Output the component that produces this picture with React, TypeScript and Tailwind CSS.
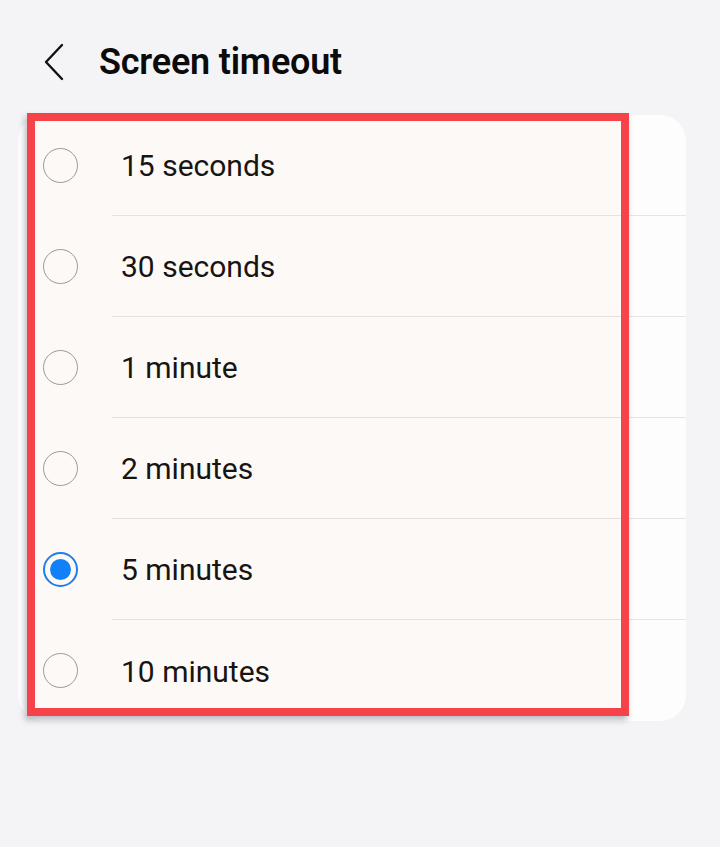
const OPTIONS = [
  "15 seconds",
  "30 seconds",
  "1 minute",
  "2 minutes",
  "5 minutes",
  "10 minutes",
];
const SELECTED = "5 minutes";

function Radio({ checked }: { checked: boolean }) {
  if (checked) {
    return (
      <span className="flex h-[35px] w-[35px] items-center justify-center rounded-full border-2 border-[#1b7df2]">
        <span className="h-[21px] w-[21px] rounded-full bg-[#0a80ff]" />
      </span>
    );
  }
  return (
    <span className="block h-[35px] w-[35px] rounded-full border-[1.5px] border-[#9a9a9a]" />
  );
}

export default function App() {
  return (
    <div
      className="relative h-[847px] w-[720px] overflow-hidden bg-[#f4f4f6]"
      style={{ fontFamily: "Roboto, 'Noto Sans', sans-serif" }}
    >
      {/* header */}
      <div className="flex h-[115px] items-start pt-[40px]">
        <svg
          width="24"
          height="40"
          viewBox="0 0 24 40"
          className="ml-[42px] mt-[2px]"
          fill="none"
          stroke="#111"
          strokeWidth="2.4"
          strokeLinecap="round"
          strokeLinejoin="round"
        >
          <path d="M20 3 L4 20 L20 37" />
        </svg>
        <h1 className="ml-[33px] text-[36px] font-semibold leading-[44px] tracking-[-0.2px] text-[#0b0b0b]">
          Screen timeout
        </h1>
      </div>

      {/* options card */}
      <div className="ml-[18px] w-[668px] rounded-[26px] bg-[#fdfdfd]">
        {OPTIONS.map((label, i) => (
          <div key={label} className="flex h-[101px] items-stretch">
            <div className="flex w-[94px] items-center pl-[25px]">
              <Radio checked={label === SELECTED} />
            </div>
            <div
              className={
                "flex flex-1 items-center " +
                (i < OPTIONS.length - 1 ? "border-b border-[#e6e4e4]" : "")
              }
            >
              <span className="pl-[9px] pt-[2px] text-[30px] leading-none text-[#111]">{label}</span>
            </div>
          </div>
        ))}
      </div>

      {/* red highlight overlay */}
      <div className="pointer-events-none absolute left-[27px] top-[113px] h-[603px] w-[602px] border-[8px] border-[#f6434a] bg-[#ff7a30]/[0.03] shadow-[-2px_4px_6px_rgba(60,60,90,0.35)]" />
    </div>
  );
}
